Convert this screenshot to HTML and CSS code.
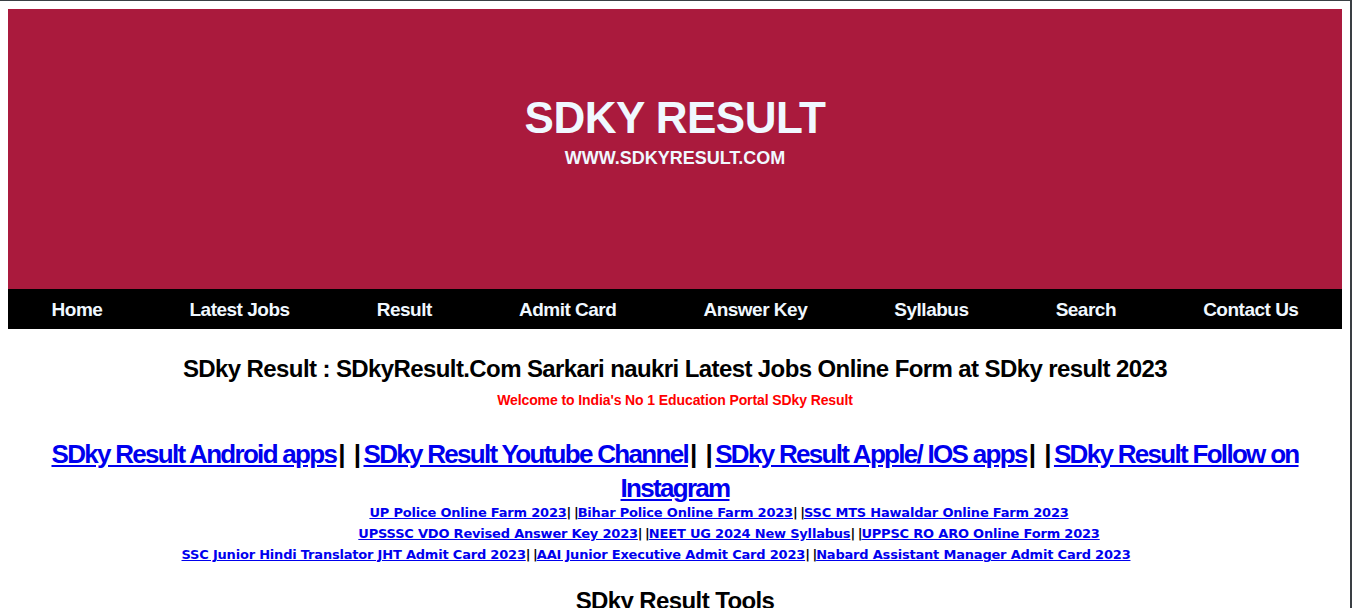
FILE: index.html
```html
<!DOCTYPE html>
<html lang="en">
<head>
<meta charset="utf-8">
<title>SDKY RESULT</title>
<link rel="stylesheet" href="styles.css">
</head>
<body>
<header class="masthead">
  <h1 class="site-title">SDKY RESULT</h1>
  <div class="site-url">WWW.SDKYRESULT.COM</div>
</header>
<nav class="menu">
  <a href="#">Home</a>
  <a href="#">Latest Jobs</a>
  <a href="#">Result</a>
  <a href="#">Admit Card</a>
  <a href="#">Answer Key</a>
  <a href="#">Syllabus</a>
  <a href="#">Search</a>
  <a href="#">Contact Us</a>
</nav>
<main class="content">
  <h2 class="page-title">SDky Result : SDkyResult.Com Sarkari naukri Latest Jobs Online Form at SDky result 2023</h2>
  <p class="welcome">Welcome to India's No 1 Education Portal SDky Result</p>
  <p class="big-links"><a href="#">SDky Result Android apps</a><span class="sep">| |</span><a href="#">SDky Result Youtube Channel</a><span class="sep">| |</span><a href="#">SDky Result Apple/ IOS apps</a><span class="sep">| |</span><a href="#">SDky Result Follow on Instagram</a></p>
  <div class="small-links">
    <div class="row row-1"><a href="#">UP Police Online Farm 2023</a><span class="sep">| |</span><a href="#">Bihar Police Online Farm 2023</a><span class="sep">| |</span><a href="#">SSC MTS Hawaldar Online Farm 2023</a></div>
    <div class="row row-2"><a href="#">UPSSSC VDO Revised Answer Key 2023</a><span class="sep">| |</span><a href="#">NEET UG 2024 New Syllabus</a><span class="sep">| |</span><a href="#">UPPSC RO ARO Online Form 2023</a></div>
    <div class="row row-3"><a href="#">SSC Junior Hindi Translator JHT Admit Card 2023</a><span class="sep">| |</span><a href="#">AAI Junior Executive Admit Card 2023</a><span class="sep">| |</span><a href="#">Nabard Assistant Manager Admit Card 2023</a></div>
  </div>
  <h2 class="tools-title">SDky Result Tools</h2>
</main>
</body>
</html>
```
FILE: styles.css
```css
html {
  border-top: 1px solid #3a3f44;
  border-right: 2px solid #3a3f44;
  background: #fff;
}
body {
  margin: 8px;
  font-family: "Liberation Sans", Arial, sans-serif;
  color: #000;
}
.masthead {
  background: #aa1a3d;
  height: 280px;
  box-sizing: border-box;
  padding-top: 83px;
  text-align: center;
  color: #f0f8ff;
}
.site-title {
  margin: 0;
  font-size: 44px;
  line-height: 52px;
  font-weight: bold;
  letter-spacing: -0.5px;
}
.site-url {
  font-size: 18px;
  line-height: 22px;
  font-weight: bold;
  margin-top: 3px;
}
.menu {
  background: #000;
  height: 40px;
  box-sizing: border-box;
  padding-top: 2px;
  display: flex;
  justify-content: space-around;
  align-items: center;
}
.menu a {
  color: #f0f8ff;
  text-decoration: none;
  font-weight: bold;
  font-size: 19px;
  letter-spacing: -0.5px;
}
.content {
  text-align: center;
}
.page-title {
  margin: 25px 0 0;
  font-size: 24px;
  line-height: 30px;
  font-weight: bold;
  letter-spacing: -0.6px;
}
.welcome {
  margin: 7px 0 0;
  color: #ff0000;
  font-weight: bold;
  font-size: 14px;
  line-height: 18px;
  letter-spacing: -0.1px;
}
.big-links {
  margin: 28px 0 0;
  font-size: 26px;
  line-height: 34px;
  font-weight: bold;
  letter-spacing: -1.7px;
}
.big-links a,
.small-links a {
  color: #0000ee;
  text-decoration: underline;
}
.sep {
  color: #000;
  font-weight: bold;
}
.big-links .sep {
  margin: 0 2px;
  letter-spacing: 0.5px;
}
.small-links {
  margin-top: -3px;
  font-family: "DejaVu Sans", "Liberation Sans", sans-serif;
  font-size: 13px;
  line-height: 21px;
  font-weight: bold;
  letter-spacing: -0.2px;
}
.small-links .sep {
  letter-spacing: -1px;
}
.row-1 {
  padding-left: 88px;
}
.row-2 {
  padding-left: 108px;
}
.row-3 {
  padding-right: 38px;
}
.tools-title {
  margin: 21px 0 0;
  font-size: 24px;
  line-height: 30px;
  font-weight: bold;
  letter-spacing: -0.6px;
}
```
